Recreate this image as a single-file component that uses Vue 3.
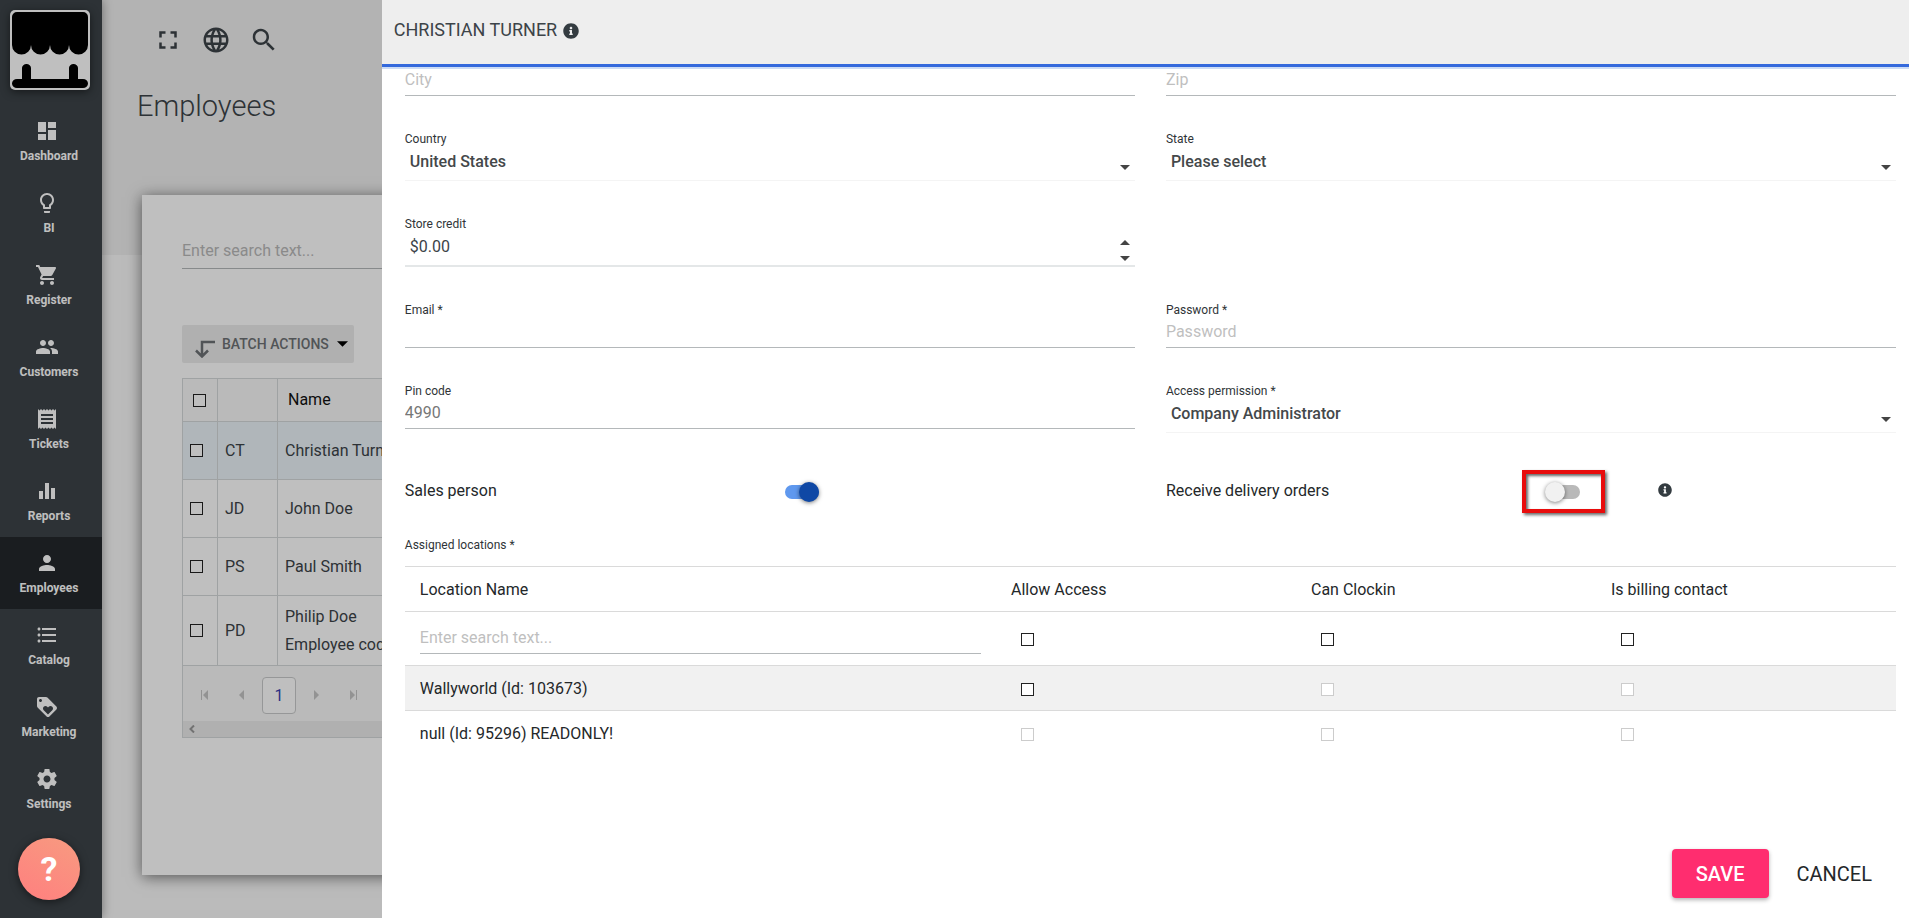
<template>
  <div class="layout">
    <!-- Sidebar -->
    <aside class="sidebar">
      <a href="#" class="logo" aria-label="Home">
        <svg viewBox="0 0 80 80">
          <path d="M7 2H73a5 5 0 0 1 5 5V35a9.5 9.5 0 0 1-19 0a9.5 9.5 0 0 1-19 0a9.5 9.5 0 0 1-19 0a9.5 9.5 0 0 1-19 0V7a5 5 0 0 1 5-5z" />
          <path d="M12 69V58a4.5 4 0 0 1 9 0v11h38V58a4.5 4 0 0 1 9 0v11h5a5 4.5 0 0 1 0 9H7a5 4.5 0 0 1 0-9z" />
        </svg>
      </a>
      <nav class="nav">
        <a
          v-for="item in navItems"
          :key="item.label"
          href="#"
          class="nav-item"
          :class="{ active: item.label === 'Employees' }"
        >
          <svg class="nav-icon" viewBox="0 0 24 24"><path :d="item.icon" /></svg>
          <span>{{ item.label }}</span>
        </a>
      </nav>
      <button type="button" class="help-button" aria-label="Help">?</button>
    </aside>

    <!-- Employee list -->
    <main class="page">
      <div class="toolbar">
        <button v-for="tool in tools" :key="tool.label" type="button" :aria-label="tool.label">
          <svg viewBox="0 0 24 24"><path :d="tool.icon" /></svg>
        </button>
      </div>
      <h1 class="page-title">Employees</h1>

      <section class="card">
        <input class="text-input card-search" type="text" placeholder="Enter search text..." aria-label="Search employees" />
        <button type="button" class="batch-button">
          <svg class="batch-icon" viewBox="0 0 20 18"><path d="M20 2H7V16M1 10.500L7 16.500L13 10.500" /></svg>
          <span>BATCH ACTIONS</span>
          <svg class="batch-caret" viewBox="0 0 12 6"><path d="M0 0h12L6 6z" /></svg>
        </button>

        <div class="grid">
          <table class="grid-table">
            <thead>
              <tr>
                <th class="check-col"><input type="checkbox" class="check" aria-label="Select all" /></th>
                <th class="initials-col"></th>
                <th>Name</th>
              </tr>
            </thead>
            <tbody>
              <tr v-for="employee in employees" :key="employee.initials" :class="{ selected: employee.selected }">
                <td><input type="checkbox" class="check" :aria-label="'Select ' + employee.name" /></td>
                <td>{{ employee.initials }}</td>
                <td>
                  {{ employee.name }}
                  <div v-if="employee.note">{{ employee.note }}</div>
                </td>
              </tr>
            </tbody>
          </table>
          <div class="pager">
            <button type="button" aria-label="First page">
              <svg viewBox="0 0 8 10"><path d="M0 0h1v10H0zM7 0v10L2 5z" /></svg>
            </button>
            <button type="button" aria-label="Previous page">
              <svg viewBox="0 0 8 10"><path d="M6 0v10L1 5z" /></svg>
            </button>
            <button type="button" class="current">1</button>
            <button type="button" aria-label="Next page">
              <svg viewBox="0 0 8 10"><path d="M2 0v10l5-5z" /></svg>
            </button>
            <button type="button" aria-label="Last page">
              <svg viewBox="0 0 8 10"><path d="M7 0h1v10H7zM1 0v10l5-5z" /></svg>
            </button>
          </div>
          <div class="scrollbar">
            <svg viewBox="0 0 6 8"><path d="M5 0.500L1.500 4L5 7.500" /></svg>
          </div>
        </div>
      </section>
    </main>

    <div class="backdrop"></div>

    <!-- Edit drawer -->
    <form class="drawer" @submit.prevent>
      <header class="drawer-header">
        <h2>CHRISTIAN TURNER</h2>
        <svg class="info" viewBox="0 0 512 512"><path :d="infoIcon" /></svg>
      </header>

      <div class="drawer-body">
        <div class="fields">
          <div class="field">
            <input v-model="form.city" class="text-input" type="text" placeholder="City" aria-label="City" />
          </div>
          <div class="field">
            <input v-model="form.zip" class="text-input" type="text" placeholder="Zip" aria-label="Zip" />
          </div>

          <div class="field">
            <label for="country">Country</label>
            <div class="select-wrap">
              <select id="country" v-model="form.country">
                <option>United States</option>
              </select>
              <svg class="caret" viewBox="0 0 10 5"><path d="M0 0h10L5 5z" /></svg>
            </div>
          </div>
          <div class="field">
            <label for="state">State</label>
            <div class="select-wrap">
              <select id="state" v-model="form.state">
                <option>Please select</option>
              </select>
              <svg class="caret" viewBox="0 0 10 5"><path d="M0 0h10L5 5z" /></svg>
            </div>
          </div>

          <div class="field credit">
            <label for="credit">Store credit</label>
            <div class="spin-wrap">
              <input id="credit" v-model="form.credit" type="text" />
              <div class="spin-buttons">
                <button type="button" aria-label="Increase">
                  <svg viewBox="0 0 10 5"><path d="M0 5h10L5 0z" /></svg>
                </button>
                <button type="button" aria-label="Decrease">
                  <svg viewBox="0 0 10 5"><path d="M0 0h10L5 5z" /></svg>
                </button>
              </div>
            </div>
          </div>

          <div class="field">
            <label for="email">Email *</label>
            <input id="email" v-model="form.email" class="text-input" type="email" />
          </div>
          <div class="field">
            <label for="password">Password *</label>
            <input id="password" v-model="form.password" class="text-input" type="password" placeholder="Password" />
          </div>

          <div class="field">
            <label for="pin">Pin code</label>
            <input id="pin" v-model="form.pin" class="text-input" type="text" />
          </div>
          <div class="field">
            <label for="permission">Access permission *</label>
            <div class="select-wrap">
              <select id="permission" v-model="form.permission">
                <option>Company Administrator</option>
              </select>
              <svg class="caret" viewBox="0 0 10 5"><path d="M0 0h10L5 5z" /></svg>
            </div>
          </div>

          <div class="switch-row">
            <label for="sales">Sales person</label>
            <div class="switch-cell">
              <span class="switch-box">
                <input id="sales" v-model="form.sales" type="checkbox" class="switch" role="switch" />
              </span>
            </div>
          </div>
          <div class="switch-row">
            <label for="delivery">Receive delivery orders</label>
            <div class="switch-cell">
              <span class="switch-box highlighted">
                <input id="delivery" v-model="form.delivery" type="checkbox" class="switch" role="switch" />
              </span>
              <svg class="info small" viewBox="0 0 512 512"><path :d="infoIcon" /></svg>
            </div>
          </div>
        </div>

        <p class="section-label">Assigned locations *</p>
        <table class="locations">
          <thead>
            <tr>
              <th>Location Name</th>
              <th v-for="column in columns" :key="column" class="flag-col">{{ column }}</th>
            </tr>
            <tr class="filter-row">
              <td><input class="text-input" type="text" placeholder="Enter search text..." aria-label="Search locations" /></td>
              <td v-for="column in columns" :key="column" class="flag">
                <input type="checkbox" class="check" :aria-label="column + ' for all'" />
              </td>
            </tr>
          </thead>
          <tbody>
            <tr v-for="location in locations" :key="location.name">
              <td>{{ location.name }}</td>
              <td v-for="(column, i) in columns" :key="column" class="flag">
                <input type="checkbox" class="check" :disabled="!location.enabled[i]" :aria-label="column" />
              </td>
            </tr>
          </tbody>
        </table>
      </div>

      <footer class="drawer-footer">
        <button type="submit" class="save">SAVE</button>
        <button type="button" class="cancel">CANCEL</button>
      </footer>
    </form>
  </div>
</template>

<script setup>
import { reactive } from 'vue';

const form = reactive({
  city: '',
  zip: '',
  country: 'United States',
  state: 'Please select',
  credit: '$0.00',
  email: '',
  password: '',
  pin: '4990',
  permission: 'Company Administrator',
  sales: true,
  delivery: false
});

const columns = ['Allow Access', 'Can Clockin', 'Is billing contact'];

const locations = [
  { name: 'Wallyworld (Id: 103673)', enabled: [true, false, false] },
  { name: 'null (Id: 95296) READONLY!', enabled: [false, false, false] }
];

const employees = [
  { initials: 'CT', name: 'Christian Turner', selected: true },
  { initials: 'JD', name: 'John Doe' },
  { initials: 'PS', name: 'Paul Smith' },
  { initials: 'PD', name: 'Philip Doe', note: 'Employee code' }
];

const infoIcon =
  'M256 8C119.043 8 8 119.083 8 256c0 136.997 111.043 248 248 248s248-111.003 248-248C504 119.083 392.957 8 256 8zm0 110c23.196 0 42 18.804 42 42s-18.804 42-42 42-42-18.804-42-42 18.804-42 42-42zm56 254c0 6.627-5.373 12-12 12h-88c-6.627 0-12-5.373-12-12v-24c0-6.627 5.373-12 12-12h12v-64h-12c-6.627 0-12-5.373-12-12v-24c0-6.627 5.373-12 12-12h64c6.627 0 12 5.373 12 12v100h12c6.627 0 12 5.373 12 12v24z';

const tools = [
  { label: 'Fullscreen', icon: 'M7 14H5v5h5v-2H7v-3zm-2-4h2V7h3V5H5v5zm12 7h-3v2h5v-5h-2v3zM14 5v2h3v3h2V5h-5z' },
  {
    label: 'Language',
    icon: 'M11.99 2C6.47 2 2 6.48 2 12s4.470 10 9.990 10C17.520 22 22 17.520 22 12S17.520 2 11.990 2zm6.930 6h-2.950c-.32-1.250-.78-2.450-1.380-3.560 1.840.63 3.370 1.910 4.330 3.560zM12 4.040c.83 1.200 1.480 2.530 1.910 3.960h-3.820c.43-1.430 1.080-2.760 1.910-3.960zM4.260 14C4.100 13.360 4 12.690 4 12s.1-1.360.26-2h3.380c-.08.66-.14 1.320-.14 2 0 .68.06 1.340.14 2H4.260zm.82 2h2.950c.32 1.250.78 2.450 1.380 3.560-1.840-.63-3.370-1.900-4.330-3.560zm2.950-8H5.080c.96-1.660 2.490-2.930 4.330-3.560C8.810 5.550 8.350 6.750 8.030 8zM12 19.960c-.83-1.200-1.480-2.530-1.910-3.960h3.820c-.43 1.430-1.080 2.760-1.910 3.960zM14.340 14H9.660c-.09-.66-.16-1.320-.16-2 0-.68.07-1.350.16-2h4.680c.09.65.16 1.320.16 2 0 .68-.07 1.340-.16 2zm.25 5.560c.6-1.110 1.060-2.310 1.380-3.560h2.950c-.96 1.650-2.490 2.930-4.330 3.560zM16.360 14c.08-.66.14-1.320.14-2 0-.68-.06-1.340-.14-2h3.380c.16.64.26 1.310.26 2s-.1 1.360-.26 2h-3.380z'
  },
  {
    label: 'Search',
    icon: 'M15.500 14h-.79l-.28-.27C15.410 12.590 16 11.110 16 9.500 16 5.910 13.090 3 9.500 3S3 5.910 3 9.500 5.910 16 9.500 16c1.610 0 3.090-.59 4.230-1.570l.27.28v.79l5 4.990L20.490 19l-4.990-5zm-6 0C7.010 14 5 11.990 5 9.500S7.010 5 9.500 5 14 7.010 14 9.500 11.990 14 9.500 14z'
  }
];

const navItems = [
  { label: 'Dashboard', icon: 'M3 13h8V3H3v10zm0 8h8v-6H3v6zm10 0h8V11h-8v10zm0-18v6h8V3h-8z' },
  {
    label: 'BI',
    icon: 'M9 21c0 .55.45 1 1 1h4c.55 0 1-.45 1-1v-1H9v1zm3-19C8.140 2 5 5.140 5 9c0 2.380 1.190 4.470 3 5.740V17c0 .55.45 1 1 1h6c.55 0 1-.45 1-1v-2.260c1.810-1.270 3-3.360 3-5.740 0-3.860-3.140-7-7-7zm2.850 11.100l-.85.6V16h-4v-2.300l-.85-.6C7.800 12.160 7 10.630 7 9c0-2.760 2.240-5 5-5s5 2.240 5 5c0 1.630-.8 3.160-2.150 4.100z'
  },
  {
    label: 'Register',
    icon: 'M7 18c-1.100 0-1.990.9-1.990 2S5.900 22 7 22s2-.9 2-2-.9-2-2-2zM1 2v2h2l3.600 7.590-1.350 2.450c-.16.28-.25.61-.25.96 0 1.100.9 2 2 2h12v-2H7.420c-.14 0-.25-.11-.25-.25l.03-.12.9-1.630h7.450c.75 0 1.410-.41 1.750-1.030l3.580-6.490c.08-.14.12-.31.12-.48 0-.55-.45-1-1-1H5.210l-.94-2H1zm16 16c-1.100 0-1.990.9-1.990 2s.89 2 1.990 2 2-.9 2-2-.9-2-2-2z'
  },
  {
    label: 'Customers',
    icon: 'M16 11c1.660 0 2.990-1.340 2.990-3S17.660 5 16 5c-1.660 0-3 1.340-3 3s1.340 3 3 3zm-8 0c1.660 0 2.990-1.340 2.990-3S9.660 5 8 5C6.340 5 5 6.340 5 8s1.340 3 3 3zm0 2c-2.330 0-7 1.170-7 3.500V19h14v-2.500c0-2.330-4.670-3.500-7-3.500zm8 0c-.29 0-.62.02-.97.05 1.160.84 1.970 1.970 1.970 3.450V19h6v-2.500c0-2.330-4.670-3.500-7-3.500z'
  },
  {
    label: 'Tickets',
    icon: 'M18 17H6v-2h12v2zm0-4H6v-2h12v2zm0-4H6V7h12v2zM3 22l1.500-1.500L6 22l1.500-1.500L9 22l1.500-1.500L12 22l1.500-1.500L15 22l1.500-1.500L18 22l1.500-1.500L21 22V2l-1.500 1.500L18 2l-1.500 1.500L15 2l-1.500 1.500L12 2l-1.500 1.500L9 2 7.500 3.500 6 2 4.500 3.500 3 2v20z'
  },
  { label: 'Reports', icon: 'M10 20h4V4h-4v16zm-6 0h4v-8H4v8zM16 9v11h4V9h-4z' },
  {
    label: 'Employees',
    icon: 'M12 12c2.210 0 4-1.790 4-4s-1.790-4-4-4-4 1.790-4 4 1.790 4 4 4zm0 2c-2.670 0-8 1.340-8 4v2h16v-2c0-2.660-5.330-4-8-4z'
  },
  {
    label: 'Catalog',
    icon: 'M4 10.500c-.83 0-1.500.67-1.500 1.500s.67 1.500 1.500 1.500 1.500-.67 1.500-1.500-.67-1.500-1.500-1.500zm0-6c-.83 0-1.500.67-1.500 1.500S3.170 7.500 4 7.500 5.500 6.830 5.500 6 4.830 4.500 4 4.500zm0 12c-.83 0-1.500.68-1.500 1.500s.68 1.500 1.500 1.500 1.500-.68 1.500-1.500-.67-1.500-1.500-1.500zM7 19h14v-2H7v2zm0-6h14v-2H7v2zm0-8v2h14V5H7z'
  },
  {
    label: 'Marketing',
    icon: 'M21.410 11.580l-9-9C12.050 2.220 11.550 2 11 2H4c-1.100 0-2 .9-2 2v7c0 .55.22 1.050.59 1.420l9 9c.36.36.86.58 1.410.58.55 0 1.050-.22 1.410-.59l7-7c.37-.36.59-.86.59-1.410 0-.55-.23-1.060-.59-1.420zM5.500 7C4.670 7 4 6.330 4 5.500S4.670 4 5.500 4 7 4.670 7 5.500 6.330 7 5.500 7zm11.770 8.270L13 19.540l-4.270-4.270C8.280 14.810 8 14.190 8 13.500c0-1.380 1.120-2.500 2.500-2.500.69 0 1.320.28 1.770.74l.73.72.73-.73c.45-.45 1.080-.73 1.770-.73 1.380 0 2.500 1.120 2.500 2.500 0 .69-.28 1.320-.73 1.770z'
  },
  {
    label: 'Settings',
    icon: 'M19.430 12.980c.04-.32.07-.64.07-.98s-.03-.66-.07-.98l2.110-1.650c.19-.15.24-.42.12-.64l-2-3.460c-.12-.22-.39-.3-.61-.22l-2.490 1c-.52-.4-1.080-.73-1.690-.98l-.38-2.650C14.460 2.180 14.250 2 14 2h-4c-.25 0-.46.18-.49.42l-.38 2.650c-.61.25-1.170.59-1.690.98l-2.490-1c-.23-.09-.49 0-.61.22l-2 3.460c-.13.22-.07.49.12.64l2.110 1.650c-.04.32-.07.65-.07.98s.03.66.07.98l-2.110 1.650c-.19.15-.24.42-.12.64l2 3.460c.12.22.39.3.61.22l2.490-1c.52.4 1.080.73 1.690.98l.38 2.650c.03.24.24.42.49.42h4c.25 0 .46-.18.49-.42l.38-2.650c.61-.25 1.170-.59 1.690-.98l2.490 1c.23.09.49 0 .61-.22l2-3.460c.12-.22.07-.49-.12-.64l-2.110-1.650zM12 15.500c-1.930 0-3.500-1.570-3.500-3.500s1.570-3.500 3.500-3.500 3.500 1.570 3.500 3.500-1.570 3.500-3.500 3.500z'
  }
];
</script>

<style>
body {
  font-family: Roboto, "Liberation Sans", sans-serif;
  font-size: 16px;
  color: #24282a;
}

button,
input,
select {
  font: inherit;
  color: inherit;
}
</style>

<style scoped>
* {
  box-sizing: border-box;
}

.layout {
  display: flex;
  min-height: 100vh;
  position: relative;
  overflow: hidden;
}

button {
  border: none;
  background: none;
  padding: 0;
  cursor: pointer;
}

svg {
  display: block;
}

/* Sidebar */
.sidebar {
  position: relative;
  display: flex;
  flex-direction: column;
  flex: none;
  width: 102px;
  background-color: #3c4348;
  box-shadow: 0 0 10px rgba(0, 0, 0, 0.4);
}

.logo {
  width: 80px;
  height: 80px;
  margin: 10px 10px 15px;
  border-radius: 5px;
  background-color: #fff;
  box-shadow: 0 2px 8px rgba(0, 0, 0, 0.5);
}

.nav-item {
  display: flex;
  flex-direction: column;
  align-items: center;
  gap: 5px;
  height: 72px;
  padding: 14px 4px 0 0;
  color: #fff;
  font-size: 12px;
  font-weight: 700;
  line-height: 16px;
  text-decoration: none;
}

.nav-item.active {
  background-color: #23272b;
}

.nav-icon {
  width: 24px;
  height: 24px;
  margin-right: 4px;
  fill: #fff;
}

.help-button {
  position: relative;
  z-index: 2;
  width: 62px;
  height: 62px;
  margin: 13px 18px 0;
  border-radius: 50%;
  background: linear-gradient(30deg, #ff7f7f, #f79b80);
  box-shadow: 0 2px 8px rgba(0, 0, 0, 0.5);
  color: #fff;
  font-size: 34px;
  font-weight: 700;
}

/* Page */
.page {
  display: flex;
  flex-direction: column;
  flex: 1;
  min-width: 0;
  padding: 25px 40px 43px;
  background: linear-gradient(#efefef 255px, #fafafa 255px);
}

.toolbar {
  display: flex;
  gap: 18px;
  padding-left: 11px;
}

.toolbar svg {
  width: 30px;
  height: 30px;
  fill: #3c4348;
}

.page-title {
  margin: 31px 0 69px;
  font-size: 29px;
  font-weight: 300;
  line-height: 40px;
  color: #3c4348;
  text-indent: -5px;
}

.card {
  flex: 1;
  padding: 43px 40px 0;
  background-color: #fff;
  box-shadow: 0 2px 14px rgba(0, 0, 0, 0.55);
}

.text-input {
  display: block;
  width: 100%;
  height: 29px;
  padding: 0 0 4px;
  border: none;
  border-bottom: 1px solid #b4b8ba;
  border-radius: 0;
  background: none;
  line-height: 24px;
  outline: none;
}

.text-input::placeholder {
  color: #bfbfbf;
  opacity: 1;
}

.card-search {
  height: 31px;
  padding-bottom: 6px;
}

.batch-button {
  display: flex;
  align-items: center;
  height: 38px;
  margin: 56px 0 15px;
  padding: 0 6px 0 13px;
  border-radius: 2px;
  background-color: #ebebeb;
  color: #6d7174;
  font-size: 14px;
  font-weight: 500;
}

.batch-icon {
  width: 20px;
  height: 18px;
  margin: 9px 7px 0 0;
  fill: none;
  stroke: #6d7174;
  stroke-width: 2.500;
}

.batch-caret {
  width: 11px;
  height: 6px;
  margin-left: 8px;
  fill: #000;
}

.card-search::placeholder {
  color: #b9b9b9;
}

.grid {
  border: 1px solid #d4d8da;
  background-color: #f8f8f8;
}

.grid-table {
  width: 100%;
  border-collapse: separate;
  border-spacing: 0;
  table-layout: fixed;
  color: #3c4348;
}

.grid-table th,
.grid-table td {
  height: 58px;
  padding: 0 7px;
  border-right: 1px solid #d4d8da;
  border-bottom: 1px solid #d4d8da;
  background-color: #fff;
  line-height: 28px;
  text-align: left;
}

.grid-table th {
  height: 43px;
  padding: 0 10px;
  background-color: #f8f8f8;
  color: #111;
  font-weight: 400;
}

.grid-table tbody tr:last-child td {
  height: 70px;
}

.grid-table .selected td {
  background-color: #ebf3f8;
}

.check-col {
  width: 35px;
}

.initials-col {
  width: 60px;
}

.check {
  display: block;
  appearance: none;
  width: 13px;
  height: 13px;
  margin: 0;
  border: 1px solid #222;
  background-color: #fff;
}

.check:disabled {
  border-color: #ccc;
}

.pager {
  display: flex;
  align-items: center;
  gap: 3px;
  height: 55px;
  padding: 3px 5px 0;
}

.pager button {
  display: flex;
  align-items: center;
  justify-content: center;
  width: 34px;
  height: 37px;
}

.pager svg {
  width: 8px;
  height: 10px;
  fill: #c4c4c4;
}

.pager .current {
  border: 1px solid #c8cacb;
  border-radius: 4px;
  background-color: #fff;
  color: #3a3fb0;
}

.scrollbar {
  height: 16px;
  padding: 4px 6px;
  background-color: #ebebeb;
}

.scrollbar svg {
  width: 6px;
  height: 8px;
  fill: none;
  stroke: #999;
  stroke-width: 2;
}

.backdrop {
  position: absolute;
  inset: 0;
  z-index: 1;
  background-color: rgba(0, 0, 0, 0.25);
}

/* Drawer */
.drawer {
  position: absolute;
  top: 0;
  right: 0;
  bottom: 0;
  z-index: 3;
  display: flex;
  flex-direction: column;
  width: 80%;
  background-color: #fff;
}

.drawer-header {
  position: relative;
  display: flex;
  align-items: center;
  gap: 6px;
  flex: none;
  height: 67px;
  padding: 0 12px 6px;
  border-bottom: 3px solid #3469dc;
  background-color: #eee;
  box-shadow: 0 2px 0 #ccdcf5;
}

.drawer-header h2 {
  margin: 0;
  font-size: 18px;
  font-weight: 400;
  color: #3c4348;
}

.info {
  width: 16px;
  height: 16px;
  margin-top: 4px;
  fill: #343c41;
}

.info.small {
  width: 14px;
  height: 14px;
  margin: 0 0 4px;
}

.drawer-body {
  flex: 1;
  padding: 0 13px 0 23px;
}

.fields {
  display: grid;
  grid-template-columns: 1fr 1fr;
  gap: 35px 31px;
  align-items: start;
}

.field {
  display: flex;
  flex-direction: column;
  gap: 1px;
}

.field.credit {
  grid-column: 1;
}

.field.credit + .field {
  grid-column: 1;
}

.field label,
.section-label {
  font-size: 12px;
  line-height: 16px;
  color: #2f3437;
}

#pin {
  color: #777;
}

.select-wrap,
.spin-wrap {
  display: grid;
  align-items: center;
}

.select-wrap > *,
.spin-wrap > * {
  grid-area: 1 / 1;
}

.select-wrap select {
  appearance: none;
  width: 100%;
  height: 33px;
  padding: 0 20px 4px 5px;
  border: none;
  border-bottom: 1px solid #f4f4f4;
  background: none;
  color: #44484a;
  font-weight: 500;
  line-height: 26px;
  outline: none;
}

.caret {
  justify-self: end;
  width: 10px;
  height: 5px;
  margin: 5px 5px 0 0;
  fill: #444;
  pointer-events: none;
}

.spin-wrap input {
  width: 100%;
  height: 34px;
  padding: 0 20px 6px 5px;
  border: none;
  border-bottom: 2px solid #e4e7e8;
  background: none;
  color: #3c4348;
  line-height: 26px;
  outline: none;
}

.spin-buttons {
  display: flex;
  flex-direction: column;
  gap: 11px;
  justify-self: end;
  padding-right: 5px;
}

.spin-buttons svg {
  width: 10px;
  height: 5px;
  fill: #444;
}

.switch-row {
  display: grid;
  grid-template-columns: 1fr 1fr;
  gap: 31px;
  align-items: center;
  height: 48px;
}

.switch-row label {
  padding-bottom: 4px;
}

.switch-cell {
  display: flex;
  align-items: center;
  gap: 78px;
}

.switch-box {
  position: relative;
}

.switch {
  position: relative;
  display: block;
  appearance: none;
  width: 34px;
  height: 14px;
  margin: 0;
  border-radius: 7px;
  background-color: #b9b9b9;
}

.switch::before {
  content: "";
  position: absolute;
  top: -3px;
  left: -1px;
  width: 20px;
  height: 20px;
  border-radius: 50%;
  background-color: #f1f1f1;
  box-shadow: 0 1px 4px rgba(0, 0, 0, 0.5);
}

.switch:checked {
  background-color: #5f98ee;
}

.switch:checked::before {
  left: 14px;
  background-color: #0f48a5;
}

/* Red callout frame drawn over the toggle */
.switch-box.highlighted::after {
  content: "";
  position: absolute;
  inset: -15px -25px -14px -24px;
  border: 4px solid #e80c0c;
  box-shadow: 2px 2px 3px rgba(0, 0, 0, 0.6), inset 2px 2px 3px rgba(0, 0, 0, 0.6);
  pointer-events: none;
}

.section-label {
  margin: 21px 0 13px;
}

.locations {
  width: 100%;
  border-collapse: separate;
  border-spacing: 0;
  table-layout: fixed;
}

.locations th,
.locations td {
  height: 45px;
  padding: 0 15px;
  border-top: 1px solid #dadada;
  font-weight: 400;
  text-align: left;
}

.locations .flag-col {
  width: 300px;
}

.locations .flag {
  padding-top: 2px;
  padding-left: 25px;
}

.locations .filter-row td {
  height: 54px;
  padding-top: 2px;
}

.locations tbody tr:first-child {
  background-color: #f1f1f1;
}

.drawer-footer {
  display: flex;
  justify-content: flex-end;
  gap: 4px;
  padding: 0 13px 20px;
}

.drawer-footer button {
  height: 49px;
  padding: 0 24px;
  font-size: 20px;
}

.drawer-footer .save {
  border-radius: 4px;
  background-color: #ff2d6f;
  box-shadow: 0 2px 4px rgba(0, 0, 0, 0.3);
  color: #fff;
  font-weight: 500;
}
</style>
